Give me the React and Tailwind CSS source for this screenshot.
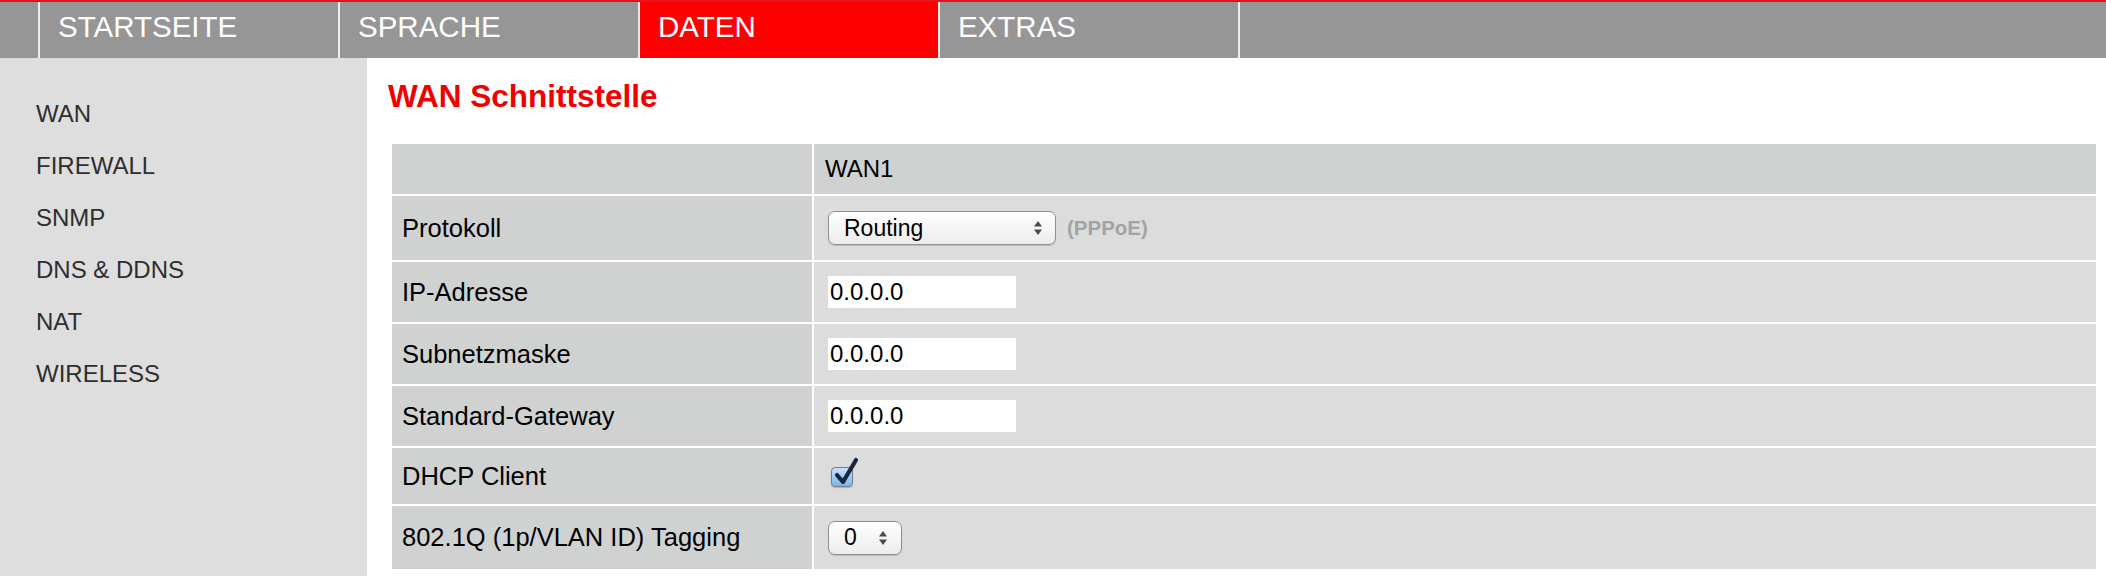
import React from 'react';

const font = { fontFamily: '"Liberation Sans", Arial, Helvetica, sans-serif' };

function Arrows() {
    return (
        <svg width="10" height="16" viewBox="0 0 10 16" className="shrink-0">
            <path d="M5 1 L9 6.5 L1 6.5 Z" fill="#4a4a4a" />
            <path d="M5 15 L9 9.5 L1 9.5 Z" fill="#4a4a4a" />
        </svg>
    );
}

function FakeSelect({ value, width, arrowsRight }) {
    return (
        <div
            className={`flex h-[34px] items-center justify-between rounded-[7px] border border-[#8f8f8f] bg-gradient-to-b from-white to-[#ececec] pl-[15px] text-[23px] leading-none text-black shadow-[0_1px_1px_rgba(0,0,0,0.15)] ${width} ${arrowsRight}`}
        >
            <span>{value}</span>
            <Arrows />
        </div>
    );
}

function FakeInput({ value }) {
    return (
        <div className="flex h-[32px] w-[188px] items-center bg-white pl-[2px] text-[24px] leading-none text-black">
            {value}
        </div>
    );
}

function FakeCheckbox() {
    return (
        <div className="relative ml-[3px] mt-[2px] h-[20px] w-[22px] rounded-[4px] border border-[#6d7e92] bg-gradient-to-b from-[#c9e0f7] to-[#7fb3e8] shadow-[0_1px_1px_rgba(0,0,0,0.2)]">
            <svg width="26" height="30" viewBox="0 0 26 30" className="absolute left-[1px] top-[-11px]">
                <path d="M4 18 L10 25 L23 3" fill="none" stroke="#172740" strokeWidth="4.2" strokeLinecap="round" strokeLinejoin="round" />
            </svg>
        </div>
    );
}

const navItems = ['STARTSEITE', 'SPRACHE', 'DATEN', 'EXTRAS'];
const sideItems = ['WAN', 'FIREWALL', 'SNMP', 'DNS & DDNS', 'NAT', 'WIRELESS'];

export default function App() {
    const rows = [
        { label: 'Protokoll', h: 'h-[64px]', value: (
            <div className="flex items-center">
                <FakeSelect value="Routing" width="w-[228px]" arrowsRight="pr-[12px]" />
                <span className="ml-[11px] text-[20.5px] font-bold text-[#a3a3a3]">(PPPoE)</span>
            </div>
        ) },
        { label: 'IP-Adresse', h: 'h-[60px]', value: <FakeInput value="0.0.0.0" /> },
        { label: 'Subnetzmaske', h: 'h-[60px]', value: <FakeInput value="0.0.0.0" /> },
        { label: 'Standard-Gateway', h: 'h-[60px]', value: <FakeInput value="0.0.0.0" /> },
        { label: 'DHCP Client', h: 'h-[56px]', value: <FakeCheckbox /> },
        { label: '802.1Q (1p/VLAN ID) Tagging', h: 'h-[63px]', value: <FakeSelect value="0" width="w-[74px]" arrowsRight="pr-[13px]" /> },
    ];

    return (
        <div className="flex min-h-[576px] w-[2106px] flex-col bg-white" style={font}>
            {/* Rote Linie + Hauptnavigation */}
            <div className="h-[2px] bg-[#e8121b]" />
            <nav className="flex h-[56px] bg-[#969696]">
                <div className="w-[38px]" />
                {navItems.map((item) => (
                    <div
                        key={item}
                        className={`w-[300px] border-l-2 border-[#ededed] pl-[18px] pt-[10px] text-[29.5px] leading-[29px] text-white ${item === 'DATEN' ? 'bg-[#ff0000]' : ''}`}
                    >
                        {item}
                    </div>
                ))}
                <div className="flex-1 border-l-2 border-[#ededed]" />
            </nav>

            <div className="flex flex-1">
                {/* Seitenmenü */}
                <aside className="w-[367px] shrink-0 bg-[#dedede] pl-[36px] pt-[30px]">
                    {sideItems.map((item) => (
                        <div key={item} className="text-[24px] leading-[52px] text-[#2e2e2e]">
                            {item}
                        </div>
                    ))}
                </aside>

                {/* Inhalt */}
                <main className="flex-1 pl-[21px] pr-[10px]">
                    <h1 className="mb-[31px] mt-[21px] text-[31.5px] font-bold leading-[34px] text-[#f00000]">
                        WAN Schnittstelle
                    </h1>
                    <div className="ml-[4px] grid grid-cols-[420px_1fr] gap-[2px]">
                        <div className="h-[50px] bg-[#cfd2d1]" />
                        <div className="flex h-[50px] items-center bg-[#cfd2d1] pl-[11px] text-[24px] text-black">WAN1</div>
                        {rows.map((row) => (
                            <React.Fragment key={row.label}>
                                <div className={`flex items-center bg-[#cfd2d1] pl-[10px] text-[25.5px] text-black ${row.h}`}>
                                    {row.label}
                                </div>
                                <div className={`flex items-center bg-[#dcdcdc] pl-[14px] ${row.h}`}>
                                    {row.value}
                                </div>
                            </React.Fragment>
                        ))}
                    </div>
                </main>
            </div>
        </div>
    );
}
